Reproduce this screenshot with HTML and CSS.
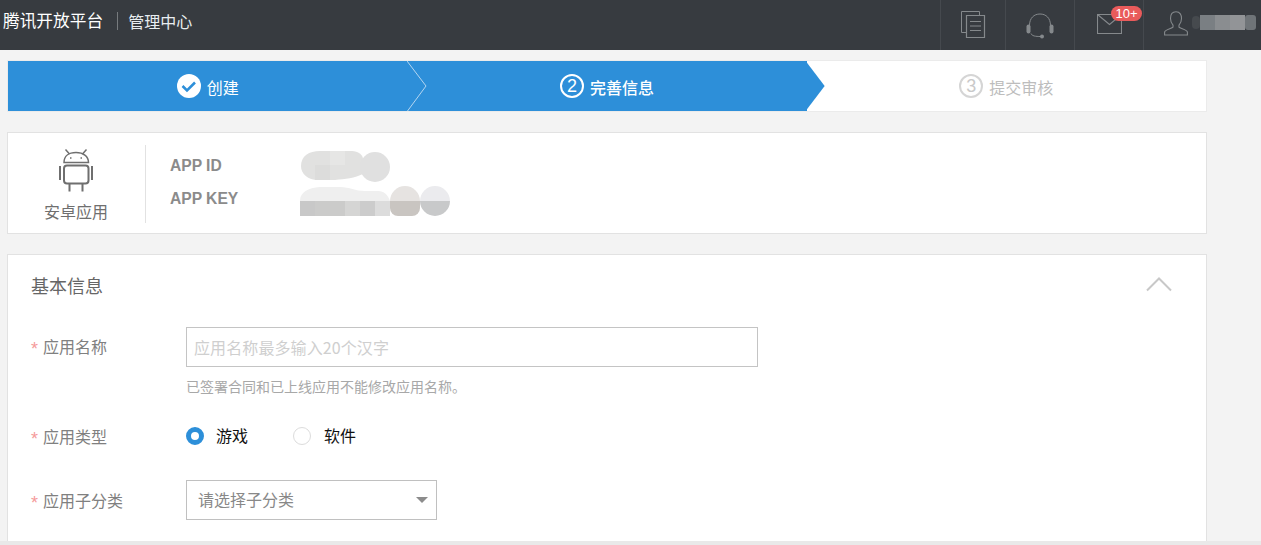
FILE: index.html
```html
<!DOCTYPE html>
<html lang="zh-CN">
<head>
<meta charset="utf-8">
<title>腾讯开放平台 管理中心</title>
<link rel="stylesheet" href="styles.css">
</head>
<body>
<header class="topbar">
  <div class="brand">
    <span class="brand-logo">腾讯开放平台</span>
    <span class="brand-sub">管理中心</span>
  </div>
  <nav class="tools">
    <a class="tool tool-docs">
      <svg width="26" height="28" viewBox="0 0 26 28" fill="none" stroke="#85898c" stroke-width="1">
        <path d="M6.5 21.5H1.5V.5H19.5V4.5"/>
        <path d="M6.5 4.5H24.5V26.5H6.5Z" stroke-width="1.2"/>
        <path d="M10 10.5H21M10 15H21M10 19.5H21"/>
      </svg>
    </a>
    <a class="tool tool-help">
      <svg width="28" height="26" viewBox="0 0 28 26" fill="none">
        <path d="M3.5 12.5C3.5 5 8 1 14 1S24.500 5 24.500 12.500" stroke="#85898c" stroke-width="1"/>
        <rect x="0.500" y="11.500" width="4" height="9" rx="2" fill="#85898c"/>
        <rect x="23.500" y="11.500" width="4" height="9" rx="2" fill="#85898c"/>
        <path d="M5 20.500C6 23 9 23.500 15 23.500" stroke="#85898c" stroke-width="1"/>
        <circle cx="16" cy="23.500" r="2" fill="#85898c"/>
      </svg>
    </a>
    <a class="tool tool-mail">
      <svg width="25" height="20" viewBox="0 0 25 20" fill="none" stroke="#85898c" stroke-width="1.100">
        <path d="M.5.5H24.500V19.500H.5Z"/>
        <path d="M.5 .5L12.500 10.500L24.500 .5"/>
      </svg>
      <span class="badge">10+</span>
    </a>
    <a class="tool tool-user">
      <svg width="24" height="25" viewBox="0 0 24 25" fill="none" stroke="#85898c" stroke-width="1.100">
        <path d="M12 .8C7.800.8 6.500 4 6.500 7.500C6.500 10.500 7.500 12.500 9 14.200V16.200C8 17.500 1 18.800.6 21V24H23.400V21C23 18.800 16 17.500 15 16.200V14.200C16.500 12.500 17.500 10.500 17.500 7.500C17.500 4 16.200.8 12 .8Z"/>
      </svg>
      <svg class="user-blur" width="65" height="15" viewBox="0 0 65 15">
        <rect x="0" y="1" width="8" height="13" rx="4" fill="#464a4e"/>
        <rect x="8" y="0" width="15" height="15" fill="#7a7f83"/>
        <rect x="23" y="0" width="15" height="15" fill="#8a8d90"/>
        <rect x="38" y="0" width="15" height="15" fill="#929497"/>
        <rect x="53" y="0" width="11" height="15" rx="3" fill="#6f7478"/>
      </svg>
    </a>
  </nav>
</header>

<main class="page">
  <ol class="steps">
    <li class="step step-done">
      <span class="step-check">
        <svg width="24" height="24" viewBox="0 0 24 24"><circle cx="12" cy="12" r="12" fill="#fff"/><path d="M5.500 12L10 16.500L18 8.500" fill="none" stroke="#2d8fd9" stroke-width="2.500"/></svg>
      </span>
      <span>创建</span>
      <svg class="step-divider" width="20" height="50" viewBox="0 0 20 50"><path d="M0 0L19 25L.5 50" fill="none" stroke="#b5d6f0" stroke-width="1"/></svg>
    </li>
    <li class="step step-active">
      <span class="step-num">2</span>
      <span class="step-strong">完善信息</span>
    </li>
    <li class="step step-todo">
      <span class="step-num">3</span>
      <span>提交审核</span>
    </li>
  </ol>

  <section class="card app-card">
    <div class="app-type">
      <svg width="34" height="43" viewBox="0 0 34 43" fill="none" stroke="#6f6f6f" stroke-width="2">
        <path d="M5 13.500C5 7 10 3.500 17 3.500S29.500 7 29.500 13.500Z" stroke-width="1.500"/>
        <path d="M6.500 .5L10.500 5M27.500 .5L23.500 5" stroke-width="1.500"/>
        <path d="M11 9H12.500M21.500 9H23" stroke-width="1.500"/>
        <rect x="5" y="16.500" width="24.500" height="18" rx="3"/>
        <path d="M1 17V31M33 17V31M10.500 35V42.500M23.500 35V42.500"/>
      </svg>
      <span>安卓应用</span>
    </div>
    <dl class="app-keys">
      <div class="app-key">
        <dt>APP ID</dt>
        <dd>
          <svg width="90" height="32" viewBox="0 0 90 32">
            <path d="M1 16C1 6 9 1 20 1H52C58 1 63 5 63 9V24C55 28 45 29 35 30H18C8 30 1 24 1 16Z" fill="#e1e1e0"/>
            <rect x="30" y="1" width="15" height="14" fill="#e6e6e5"/>
            <rect x="15" y="15" width="15" height="15" fill="#dcdcdb"/>
            <circle cx="75" cy="17" r="15" fill="#e0e0e0"/>
          </svg>
        </dd>
      </div>
      <div class="app-key">
        <dt>APP KEY</dt>
        <dd>
          <svg width="150" height="30" viewBox="0 0 150 30">
            <path d="M0 15C0 6 8 2 20 1H40C50 1 55 5 65 5H78C84 5 88 9 90 15Z" fill="#efefef"/>
            <rect x="0" y="15" width="15" height="15" fill="#c8c8c8"/>
            <rect x="15" y="15" width="30" height="15" fill="#cbcbca"/>
            <rect x="45" y="15" width="15" height="15" fill="#d5d5d4"/>
            <rect x="60" y="15" width="15" height="15" fill="#cccccc"/>
            <rect x="75" y="15" width="15" height="15" fill="#dcdcdc"/>
            <path d="M90 15A15 15 0 0 1 120 15Z" fill="#e6e3e1"/>
            <path d="M90 15H120V22A8 8 0 0 1 112 30H98A8 8 0 0 1 90 22Z" fill="#c9c5c1"/>
            <path d="M120 15A15 15 0 0 1 150 15Z" fill="#ebebee"/>
            <path d="M120 15H150A15 15 0 0 1 120 15Z" fill="#c8c9ca"/>
          </svg>
        </dd>
      </div>
    </dl>
  </section>

  <section class="card form-card">
    <div class="form-head">
      <h2>基本信息</h2>
      <svg width="26" height="16" viewBox="0 0 26 16"><path d="M1 14.500L13 2.500L25 14.500" fill="none" stroke="#c8c8c8" stroke-width="2"/></svg>
    </div>
    <div class="form-row form-row-name">
      <label class="form-label"><i>*</i>应用名称</label>
      <div class="form-field">
        <input class="text-input" type="text" placeholder="应用名称最多输入20个汉字">
        <p class="hint">已签署合同和已上线应用不能修改应用名称。</p>
      </div>
    </div>
    <div class="form-row form-row-type">
      <label class="form-label"><i>*</i>应用类型</label>
      <div class="radio-group">
        <span class="radio radio-on"></span><span class="radio-text radio-text-first">游戏</span>
        <span class="radio"></span><span class="radio-text">软件</span>
      </div>
    </div>
    <div class="form-row form-row-sub">
      <label class="form-label"><i>*</i>应用子分类</label>
      <div class="select"><span>请选择子分类</span><b class="caret"></b></div>
    </div>
  </section>
</main>
<div class="scroll-track"></div>
</body>
</html>
```

FILE: styles.css
```css
* { box-sizing: border-box; }
html, body { margin: 0; padding: 0; height: 545px; overflow: hidden; }
body {
  background: #f3f3f3;
  font-family: "Noto Sans CJK SC", "Noto Sans", sans-serif;
  font-size: 16px;
  color: #666;
}

.topbar {
  height: 50px;
  background: #373b40;
  display: flex;
  justify-content: space-between;
  color: #fff;
}
.brand { display: flex; align-items: center; padding: 0 0 9px 3px; }
.brand-logo { font-size: 16.700px; line-height: 20px; font-weight: 400; color: #fff; margin-bottom: 2px; }
.brand-sub {
  margin-left: 14px;
  padding-left: 10px;
  border-left: 1px solid #777b7e;
  font-size: 16px;
  line-height: 18px;
  color: #e8edf0;
}
.tools { display: flex; height: 50px; }
.tool {
  position: relative;
  display: flex;
  align-items: center;
  justify-content: center;
  height: 50px;
  width: 69px;
  border-left: 1px solid #45494e;
}
.tool-docs { width: 65px; }
.tool-help svg { margin-top: 1px; }
.tool-mail svg { margin: 0 0 2px 1px; }
.tool-user { width: 118px; justify-content: flex-start; padding-left: 20px; }
.tool-user svg { margin-top: -3px; }
.tool-user .user-blur { margin: -5px 0 0 4px; }
.badge {
  position: absolute;
  left: 36px;
  top: 6px;
  width: 31px;
  height: 15px;
  border-radius: 8px;
  background: #e95b5b;
  color: #fff;
  font: 13px/15px "Liberation Sans", sans-serif;
  text-align: center;
}

.page { width: 1200px; margin-left: 7px; padding-top: 10px; }

.steps {
  display: flex;
  list-style: none;
  margin: 0;
  padding: 0;
  height: 52px;
  background: #fff;
  border: 1px solid #ebebeb;
}
.step {
  position: relative;
  flex: 0 0 33.333%;
  display: flex;
  align-items: center;
  justify-content: center;
  gap: 6px;
  height: 50px;
  padding-top: 1px;
  font-size: 16px;
}
.step-done, .step-active { background: #2d8fd9; color: #fff; }
.step-todo { color: #bdbdbd; }
.step-check { display: flex; width: 24px; height: 24px; margin-top: -1px; }
.step-divider { position: absolute; right: -20px; top: 0; z-index: 2; }
.step-active::after {
  content: "";
  position: absolute;
  right: -18px;
  top: 0;
  width: 19px;
  height: 50px;
  background: #2d8fd9;
  clip-path: polygon(0 0, 100% 50%, 0 100%);
}
.step-num {
  display: flex;
  align-items: center;
  justify-content: center;
  width: 24px;
  height: 24px;
  margin-top: -1px;
  border: 2px solid currentColor;
  border-radius: 50%;
  font: 18px/20px "Liberation Sans", sans-serif;
}
.step-todo .step-num { border-color: #d5d5d5; color: #c9c9c9; }
.step-strong { font-weight: 500; }

.card { background: #fff; border: 1px solid #e2e2e2; margin-top: 20px; }

.app-card {
  display: flex;
  align-items: center;
  height: 102px;
  padding: 12px 0 10px;
}
.app-type {
  width: 138px;
  height: 78px;
  border-right: 1px solid #e2e2e2;
  display: flex;
  flex-direction: column;
  align-items: center;
  color: #6f6f6f;
  font-size: 16px;
  line-height: 22px;
  padding-right: 1px;
}
.app-type svg { margin: 4px 0 8px; flex: none; }
.app-keys { margin: 0 0 0 24px; display: flex; flex-direction: column; gap: 3px; padding-bottom: 4px; }
.app-key { display: flex; align-items: center; height: 30px; }
.app-key dt {
  width: 130px;
  font: bold 15.600px/30px "Liberation Sans", sans-serif;
  color: #8b8b8b;
}
.app-key dd { margin: 0; display: flex; }
.app-key:first-child dd svg { margin-top: 1px; }
.app-key:last-child dd svg { margin-top: 4px; }

.form-card { height: 320px; padding: 0 23px; }
.form-head {
  display: flex;
  align-items: center;
  justify-content: space-between;
  height: 62px;
  padding: 0 11px 2px 0;
}
.form-head h2 { margin: 0; font-size: 18px; font-weight: 400; color: #666; }
.form-head svg { margin-top: -3px; }

.form-row { display: flex; }
.form-label {
  width: 155px;
  flex: none;
  font-size: 16px;
  color: #808080;
  display: flex;
  align-items: center;
}
.form-label i {
  width: 12px;
  color: #f59a9a;
  font: normal 18px/16px "Liberation Sans", sans-serif;
  padding-top: 6px;
}
.form-row-name { margin-top: 10px; }
.form-row-name .form-label { height: 38px; }
.text-input {
  display: block;
  width: 572px;
  height: 40px;
  padding: 0 7px;
  border: 1px solid #c4c4c4;
  background: #fff;
  font: inherit;
  letter-spacing: .1px;
  outline: 0;
}
.text-input::placeholder { color: #cfcfcf; opacity: 1; }
.hint { margin: 9px 0 0; font-size: 14px; line-height: 20px; color: #a8a8a8; }

.form-row-type { margin-top: 31px; height: 20px; align-items: center; }
.form-row-type .form-label { margin-top: -2px; }
.radio-group { display: flex; align-items: center; margin-top: -3px; }
.radio-group .radio-text { margin-top: -2px; }
.radio {
  width: 18px;
  height: 18px;
  border: 1px solid #dcdcdc;
  border-radius: 50%;
  background: #fff;
  flex: none;
}
.radio-on { border: 5px solid #2d8fd9; }
.radio-text { margin-left: 13px; color: #111; line-height: 20px; }
.radio-text-first { margin-left: 12px; margin-right: 45px; }

.form-row-sub { margin-top: 33px; height: 40px; align-items: center; }
.form-row-sub .form-label { margin-top: -1px; }
.select {
  position: relative;
  width: 251px;
  height: 40px;
  padding-left: 11px;
  border: 1px solid #c0c0c0;
  color: #888;
  line-height: 36px;
}
.caret {
  position: absolute;
  right: 8px;
  top: 16px;
  border-top: 6px solid #8c8c8c;
  border-left: 6px solid transparent;
  border-right: 6px solid transparent;
}

.scroll-track {
  position: fixed;
  left: 0;
  right: 0;
  bottom: 0;
  height: 4px;
  background: #e9e9e9;
}
```
